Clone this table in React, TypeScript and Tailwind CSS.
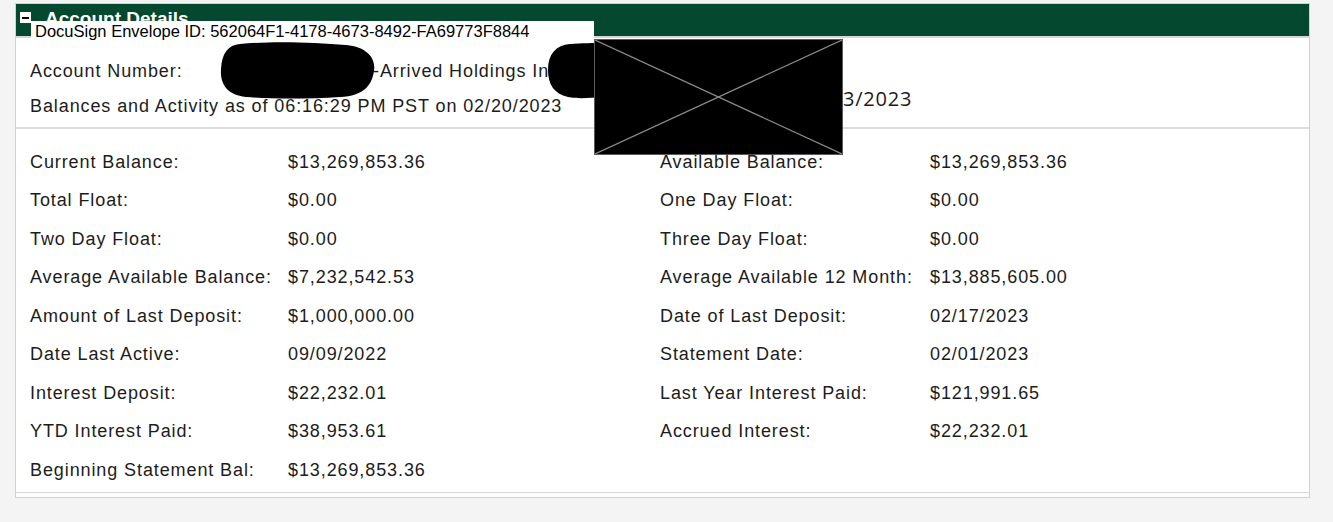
import React from "react";

const left: [string, string][] = [
  ["Current Balance:", "$13,269,853.36"],
  ["Total Float:", "$0.00"],
  ["Two Day Float:", "$0.00"],
  ["Average Available Balance:", "$7,232,542.53"],
  ["Amount of Last Deposit:", "$1,000,000.00"],
  ["Date Last Active:", "09/09/2022"],
  ["Interest Deposit:", "$22,232.01"],
  ["YTD Interest Paid:", "$38,953.61"],
  ["Beginning Statement Bal:", "$13,269,853.36"],
];

const right: [string, string][] = [
  ["Available Balance:", "$13,269,853.36"],
  ["One Day Float:", "$0.00"],
  ["Three Day Float:", "$0.00"],
  ["Average Available 12 Month:", "$13,885,605.00"],
  ["Date of Last Deposit:", "02/17/2023"],
  ["Statement Date:", "02/01/2023"],
  ["Last Year Interest Paid:", "$121,991.65"],
  ["Accrued Interest:", "$22,232.01"],
];

export default function App() {
  return (
    <div className="relative w-[1333px] h-[522px] overflow-hidden bg-[#f4f4f4] pt-[3px] pl-[15px] font-['Liberation_Sans',Arial,sans-serif] text-[18px] tracking-[0.9px] text-[#1c1c1c]">
      <div className="w-[1295px] border border-[#d2d2d2] bg-[#fcfcfc] pb-[4px]">
        {/* Header */}
        <div className="flex h-[32px] items-start bg-[#03482f] pl-[3px]">
          <div className="mt-[7px] flex h-[13px] w-[13px] items-center justify-center border border-[#333] bg-white">
            <div className="h-[2px] w-[7px] bg-black" />
          </div>
          <span className="ml-[13px] mt-[6px] text-[19px] font-bold leading-[18px] tracking-normal text-white">
            Account Details
          </span>
        </div>
        <div className="border-t-2 border-b border-[#d6d6d6] bg-white">
          {/* Top info */}
          <div className="border-b-2 border-[#dcdcdc] pl-[14px] pt-[16px] pb-[3px]">
            <div className="flex h-[35px] items-center">
              <span className="w-[192px]">Account Number:</span>
              <span className="inline-block w-[151px]" />
              <span>-Arrived Holdings Inc</span>
            </div>
            <div className="flex h-[35px] items-center">
              <span>Balances and Activity as of 06:16:29 PM PST on 02/20/2023</span>
            </div>
          </div>
          {/* Data grid */}
          <div className="flex pl-[14px] pt-[14px] pb-[2px]">
            <div className="w-[630px]">
              {left.map(([l, v]) => (
                <div key={l} className="flex h-[38.5px] items-center">
                  <span className="w-[258px] whitespace-nowrap">{l}</span>
                  <span>{v}</span>
                </div>
              ))}
            </div>
            <div>
              {right.map(([l, v]) => (
                <div key={l} className="flex h-[38.5px] items-center">
                  <span className="w-[270px] whitespace-nowrap">{l}</span>
                  <span>{v}</span>
                </div>
              ))}
            </div>
          </div>
        </div>
      </div>

      {/* DocuSign stamp */}
      <div className="absolute left-[31px] top-[21px] h-[19px] w-[563px] bg-white pl-[4px] text-[16.5px] leading-[20px] tracking-normal text-black">
        DocuSign Envelope ID: 562064F1-4178-4673-8492-FA69773F8844
      </div>

      {/* Redactions */}
      <svg className="absolute left-[218px] top-[41px]" width="160" height="60" viewBox="0 0 160 60">
        <path
          d="M22 3 C50 0 95 1 128 4 C150 6 158 18 156 30 C154 44 146 55 122 56 C90 58 55 58 28 56 C8 54 2 42 3 28 C4 12 10 4 22 3 Z"
          fill="black"
        />
      </svg>
      <svg className="absolute left-[546px] top-[42px]" width="56" height="58" viewBox="0 0 56 58">
        <path d="M24 2 C36 1 48 1 56 1 L56 55 C44 56 32 57 22 55 C8 52 2 42 2 28 C2 12 10 3 24 2 Z" fill="black" />
      </svg>
      <div className="absolute left-[594px] top-[39px] h-[116px] w-[249px] border border-[#5a5a5a] bg-black">
        <svg className="absolute inset-0" width="247" height="114" viewBox="0 0 247 114">
          <line x1="0" y1="0" x2="247" y2="114" stroke="#8a8a8a" strokeWidth="1.2" />
          <line x1="247" y1="0" x2="0" y2="114" stroke="#8a8a8a" strokeWidth="1.2" />
        </svg>
      </div>
      <div className="absolute left-[843px] top-[86px] font-['Open_Sans',sans-serif] text-[20px] leading-[26px] tracking-[0.8px] text-[#1a1a1a]">
        3/2023
      </div>
    </div>
  );
}
